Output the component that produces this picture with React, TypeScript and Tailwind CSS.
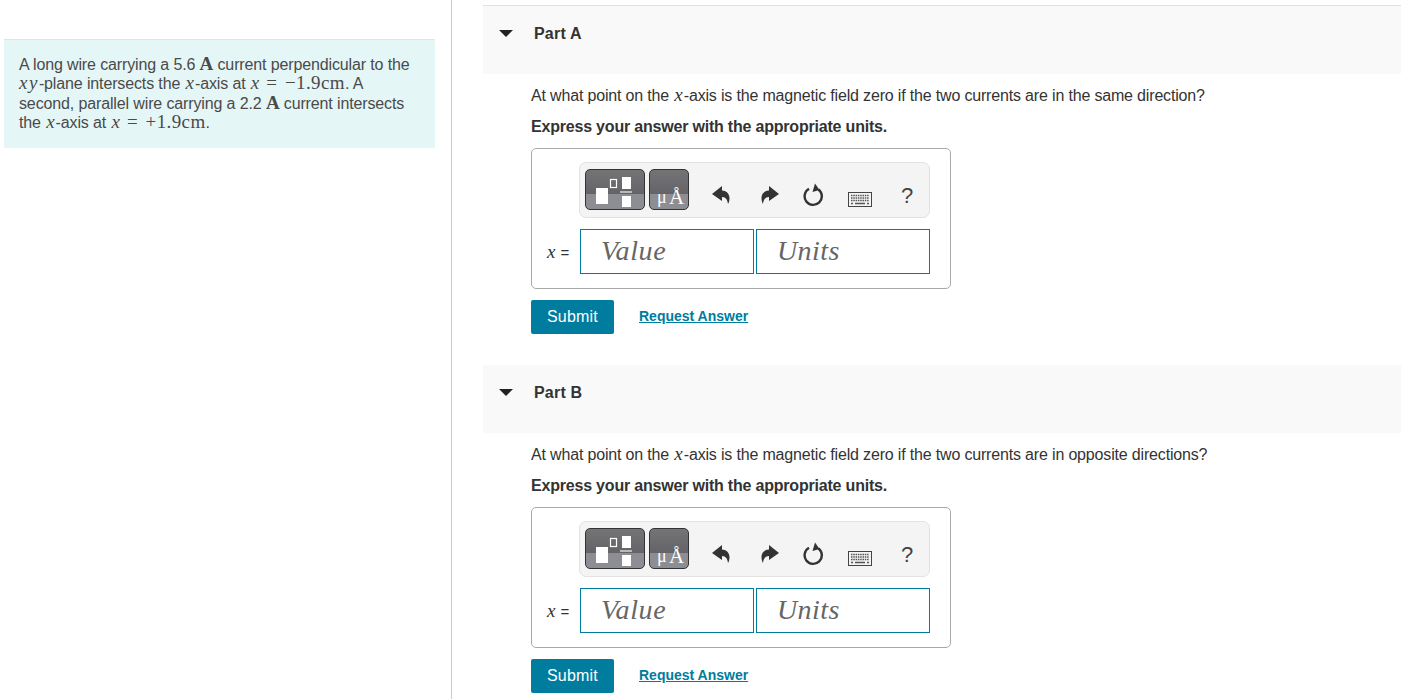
const serif = "font-['Liberation_Serif',serif]";
const mathSize = "text-[19px] leading-none";

function X() {
  return <i className={`${serif} ${mathSize} ml-[1px] tracking-[1px]`}>x</i>;
}

function Templates() {
  return (
    <div className="w-[60px] h-[41px] mb-[1px] rounded-[5px] border border-[#333] bg-[linear-gradient(#747477_0,#646468_62%,#8d8d94_62%,#8d8d94_100%)]">
      <svg width="58" height="39" viewBox="0 0 58 39">
        <rect x="10" y="18" width="12" height="16" fill="#fff" />
        <rect x="24.5" y="9.5" width="6" height="8" fill="none" stroke="#fff" strokeWidth="1.2" />
        <rect x="36" y="7" width="9" height="12" fill="#fff" />
        <rect x="34" y="21" width="12" height="2" fill="#b9b9bd" />
        <rect x="36" y="26" width="9" height="11" fill="#fff" />
      </svg>
    </div>
  );
}

function UnitsBtn() {
  return (
    <div className={`relative w-[40px] h-[41px] mb-[1px] rounded-[5px] border border-[#333] bg-[linear-gradient(#747477_0,#646468_62%,#8d8d94_62%,#8d8d94_100%)] text-white ${serif}`}>
      <span className="absolute left-[7px] top-[15px] text-[18px] leading-[24px]">μ</span>
      <span className="absolute left-[19px] top-[14px] text-[21px] leading-[26px]">Å</span>
    </div>
  );
}

function Undo() {
  return (
    <svg width="18" height="18" viewBox="0 0 18 18">
      <path d="M0 8 L10 0 V4.5 C14 4.5 17.5 7.5 17.5 12 C17.5 14 17 16.5 16 18 C15.5 14 14 11 10 11 V15 Z" fill="#333" />
    </svg>
  );
}

function Redo() {
  return (
    <svg width="18" height="18" viewBox="0 0 18 18">
      <path d="M18 8 L8 0 V4.5 C4 4.5 0.5 7.5 0.5 12 C0.5 14 1 16.5 2 18 C2.5 14 4 11 8 11 V15 Z" fill="#333" />
    </svg>
  );
}

function Reset() {
  return (
    <svg width="22" height="24" viewBox="0 0 22 24">
      <path d="M15.5 6.5 A8.6 8.6 0 1 1 6 5.8" fill="none" stroke="#333" strokeWidth="2.4" />
      <path d="M12 0.5 L16.5 7 L9.5 9 Z" fill="#333" />
    </svg>
  );
}

function Keyboard() {
  return (
    <svg width="24" height="15" viewBox="0 0 24 15">
      <rect x="0.5" y="0.5" width="23" height="14" fill="#f4f4f4" stroke="#444" />
      <path d="M3 3.5 H21 M3 6 H21 M3 8.5 H21" stroke="#555" strokeWidth="1.4" strokeDasharray="1.5 0.8" />
      <path d="M3 11.5 H5 M7 11.5 H17 M19 11.5 H21" stroke="#555" strokeWidth="1.4" />
    </svg>
  );
}

function AnswerBox() {
  return (
    <div className="w-[420px] h-[141px] border border-[#aaa] rounded-[5px] bg-white pt-[13px] pl-[47px]">
      <div className="flex items-center w-[351px] h-[56px] rounded-[7px] border border-[#e2e2e2] bg-[#f4f4f4] pl-[5px]">
        <Templates />
        <div className="ml-[4px]"><UnitsBtn /></div>
        <div className="ml-[23px] mt-[10px]"><Undo /></div>
        <div className="ml-[31px] mt-[10px]"><Redo /></div>
        <div className="ml-[24px] mt-[10px]"><Reset /></div>
        <div className="ml-[23px] mt-[18px]"><Keyboard /></div>
        <span className="ml-[29px] mt-[12px] text-[22px] leading-none text-[#444]">?</span>
      </div>
      <div className="flex items-center mt-[11px] -ml-[33px]">
        <span className="w-[34px] text-[15px] text-[#333] leading-none whitespace-nowrap"><X /> =</span>
        <div className="w-[174px] h-[45px] border border-[#007c9e] pl-[20px] pb-[2px] flex items-center">
          <span className={`text-[28px] italic text-[#666] tracking-[0.6px] ${serif}`}>Value</span>
        </div>
        <div className="ml-[2px] w-[174px] h-[45px] border border-[#007c9e] pl-[20px] pb-[2px] flex items-center">
          <span className={`text-[28px] italic text-[#666] tracking-[0.4px] ${serif}`}>Units</span>
        </div>
      </div>
    </div>
  );
}

function Part({ name, question, first }: { name: string; question: string; first?: boolean }) {
  return (
    <section>
      <div className={`bg-[#f9f9f9] flex items-start pl-[16px] ${first ? "h-[69px] border-t border-[#dfe3e8]" : "h-[68px]"}`}>
        <div className="w-0 h-0 mt-[24px] border-x-[7px] border-x-transparent border-t-[7px] border-t-[#222]" />
        <h3 className="ml-[21px] mt-[18px] text-[16px] leading-[20px] font-bold text-[#333] tracking-[0.2px]">{name}</h3>
      </div>
      <div className="pl-[48px]">
        <p className="h-[20px] mt-[11px] text-[16px] leading-[20px] text-[#333] tracking-[-0.17px] whitespace-nowrap">
          At what point on the <X />-axis is the magnetic field zero if the two currents are {question}
        </p>
        <p className="mt-[12px] text-[16px] leading-[20px] font-bold text-[#333] tracking-[-0.2px]">Express your answer with the appropriate units.</p>
        <div className="mt-[11px]"><AnswerBox /></div>
        <div className="mt-[11px] flex items-center">
          <button className="w-[83px] h-[34px] rounded-[2px] bg-[#007c9e] text-white text-[16px] tracking-[0.2px]">Submit</button>
          <a className="ml-[25px] mb-[2px] text-[14px] font-bold text-[#007c9e] underline">Request Answer</a>
        </div>
      </div>
    </section>
  );
}

function Eq({ sign }: { sign: string }) {
  return (
    <span className={`${serif} ${mathSize}`}>
      <i className="ml-[1px] tracking-[1px]">x</i>
      <span className="ml-[6px] mr-[8px]">=</span>
      <span className="tracking-[0.4px]">{sign}1.9cm</span>
    </span>
  );
}

function Line({ children }: { children: React.ReactNode }) {
  return <div className="h-[19.3px]">{children}</div>;
}

export default function App() {
  return (
    <div className="flex h-[699px] w-[1401px] overflow-hidden bg-white font-['Liberation_Sans',sans-serif]">
      <aside className="w-[452px] shrink-0 border-r border-[#c6cdd8] pt-[39px] pl-[4px] pr-[16px]">
        <div className="h-[109px] border-t border-[#dbe7e7] bg-[#e5f6f7] pl-[15px] pt-[14px] text-[16px] leading-[19.5px] text-[#4a4a4a] tracking-[-0.13px] whitespace-nowrap">
          <Line>A long wire carrying a 5.6 <b className={`${serif} ${mathSize}`}>A</b> current perpendicular to the</Line>
          <Line><i className={`${serif} ${mathSize} tracking-[1.5px]`}>xy</i>-plane intersects the <X />-axis at <Eq sign="−" />. A</Line>
          <Line>second, parallel wire carrying a 2.2 <b className={`${serif} ${mathSize}`}>A</b> current intersects</Line>
          <Line>the <X />-axis at <Eq sign="+" />.</Line>
        </div>
      </aside>
      <main className="flex-1 pl-[31px] pt-[5px]">
        <Part name="Part A" first question="in the same direction?" />
        <div className="h-[31px]" />
        <Part name="Part B" question="in opposite directions?" />
      </main>
    </div>
  );
}
